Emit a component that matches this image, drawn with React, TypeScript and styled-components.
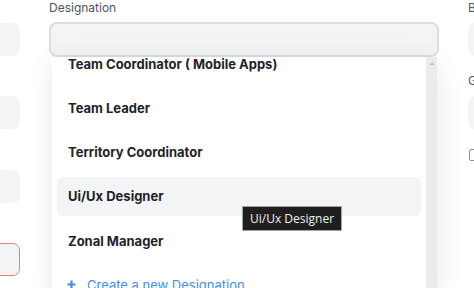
import React from 'react';
import styled, { createGlobalStyle } from 'styled-components';

const GlobalStyle = createGlobalStyle`
  html, body {
    margin: 0;
    padding: 0;
    background: #ffffff;
    overflow: hidden;
  }
  body {
    font-family: Inter, "Noto Sans", Arial, sans-serif;
  }
`;

const Page = styled.div`
  position: relative;
  width: 474px;
  height: 288px;
  overflow: hidden;
  display: flex;
  gap: 29px;
  background: #fff;
`;

const Column = styled.div<{ $width: number; $shift?: number }>`
  flex: 0 0 ${p => p.$width}px;
  margin-left: ${p => p.$shift ?? 0}px;
  display: flex;
  flex-direction: column;
  gap: 17.3px;
  position: relative;
`;

const Field = styled.div`
  display: flex;
  flex-direction: column;
`;

const Label = styled.label`
  font-size: 12px;
  line-height: 16px;
  color: #4b5563;
  margin-bottom: 7px;
  white-space: nowrap;
`;

// labels of the left column lie off screen, only the space is kept
const LabelSpace = styled.div`
  height: 23px;
`;

const Input = styled.div<{ $error?: boolean }>`
  height: 33px;
  box-sizing: border-box;
  background: #f3f4f6;
  border-radius: 7px;
  border: ${p => (p.$error ? '1px solid #f07a72' : 'none')};
`;

const SelectBox = styled.div`
  height: 35px;
  margin-top: -1px;
  box-sizing: border-box;
  background: #f3f4f6;
  border: 2px solid #dcdde0;
  border-radius: 8px;
`;

const Checkbox = styled.div`
  width: 12px;
  height: 12px;
  margin: 2px 0 0 1px;
  box-sizing: border-box;
  border: 1px solid #8f8f8f;
  border-radius: 2px;
  background: #fff;
`;

const Dropdown = styled.div`
  position: absolute;
  top: 57px;
  left: 3px;
  width: 385px;
  height: 240px;
  display: flex;
  background: #fff;
  box-shadow: 0 6px 28px rgba(0, 0, 0, 0.09);
  z-index: 5;
  overflow: hidden;
`;

const List = styled.div`
  flex: 1;
  margin-top: -13px;
  padding: 0 5px;
  display: flex;
  flex-direction: column;
  gap: 5.3px;
`;

const Option = styled.div<{ $active?: boolean }>`
  flex: 0 0 39px;
  display: flex;
  align-items: center;
  padding-left: 11px;
  border-radius: 6px;
  font-size: 13px;
  font-weight: 700;
  color: #1f2329;
  background: ${p => (p.$active ? '#f3f4f6' : 'transparent')};
  white-space: nowrap;
`;

const CreateOption = styled(Option)`
  font-weight: 400;
  color: #3f8ef0;
  gap: 11px;
  padding-left: 10px;
`;

const ScrollTrack = styled.div`
  flex: 0 0 11px;
  background: #e9ecef;
  display: flex;
  justify-content: center;
  padding-top: 5px;
  box-sizing: border-box;
`;

const ArrowUp = styled.div`
  width: 0;
  height: 0;
  border-left: 3px solid transparent;
  border-right: 3px solid transparent;
  border-bottom: 3px solid #c2c6cb;
`;

const Tooltip = styled.div`
  position: absolute;
  left: 242px;
  top: 206px;
  padding: 4px 7px;
  line-height: 15px;
  font-family: "Open Sans", "Noto Sans", sans-serif;
  font-size: 12px;
  color: #f2f2f2;
  background: #1e1e1e;
  border: 1px solid #a4a4a4;
  white-space: nowrap;
  z-index: 10;
`;

const PlusIcon = () => (
  <svg width="9" height="9" viewBox="0 0 9 9">
    <path d="M4.5 0.5v8M0.5 4.5h8" stroke="#3f8ef0" strokeWidth="2.2" />
  </svg>
);

const designations = [
  'Team Coordinator ( Mobile Apps)',
  'Team Leader',
  'Territory Coordinator',
  'Ui/Ux Designer',
  'Zonal Manager',
];

export default function App() {
  return (
    <>
      <GlobalStyle />
      <Page>
        <Column $width={200} $shift={-180}>
          {[false, false, false, true].map((err, i) => (
            <Field key={i}>
              <LabelSpace />
              <Input $error={err} />
            </Field>
          ))}
        </Column>

        <Column $width={390}>
          <Field>
            <Label>Designation</Label>
            <SelectBox />
          </Field>
          <Dropdown>
            <List>
              {designations.map(d => (
                <Option key={d} $active={d === 'Ui/Ux Designer'}>
                  {d}
                </Option>
              ))}
              <CreateOption>
                <PlusIcon />
                Create a new Designation
              </CreateOption>
            </List>
            <ScrollTrack>
              <ArrowUp />
            </ScrollTrack>
          </Dropdown>
        </Column>

        <Column $width={200}>
          <Field>
            <Label>Branch</Label>
            <Input />
          </Field>
          <Field>
            <Label>Grade</Label>
            <Input />
          </Field>
          <Checkbox />
        </Column>

        <Tooltip>Ui/Ux Designer</Tooltip>
      </Page>
    </>
  );
}
